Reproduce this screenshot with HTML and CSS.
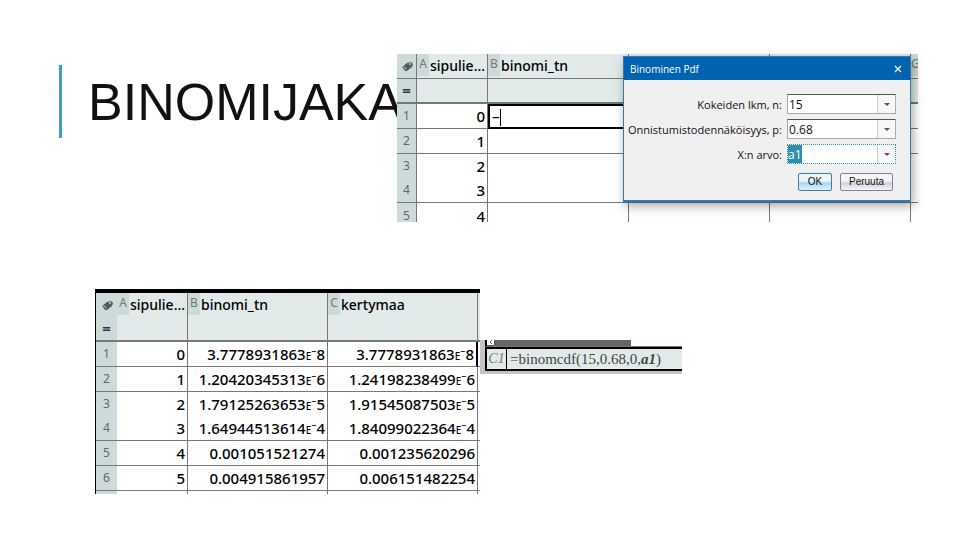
FILE: index.html
```html
<!DOCTYPE html>
<html lang="fi">
<head>
<meta charset="utf-8">
<meta name="viewport" content="width=device-width, initial-scale=1">
<title>Binomijakauma</title>
<link rel="stylesheet" href="styles.css">
</head>
<body>
<main class="slide">
  <section class="top">
    <header class="heading"><h1>BINOMIJAKA</h1></header>
    <div class="input-view">
      <div class="sheet-clip">
        <table class="sheet sheet-input">
          <colgroup><col class="col-index"><col class="col-a"><col class="col-b"><col class="col-b"><col class="col-b"><col></colgroup>
          <thead>
            <tr>
              <th class="index"><svg class="tag" viewBox="0 0 12 9" aria-hidden="true"><path d="M1 5 6 1 10 0 12 2 11 5 6 9 4 9Z" fill="#555b5b"/><path d="M1 5 4 5 5 8" stroke="#a5b0af" fill="none"/><circle cx="9" cy="2" r="1" fill="#ccdad9"/></svg></th>
              <th><span class="name"><span class="letter">A</span>sipulie...</span></th>
              <th><span class="name"><span class="letter">B</span>binomi_tn</span></th>
              <th></th><th></th>
              <th><span class="name"><span class="letter letter-cut">G</span></span></th>
            </tr>
            <tr class="formula"><th class="index"><span class="equals">=</span></th><td></td><td></td><td></td><td></td><td></td></tr>
          </thead>
          <tbody>
            <tr><th class="index">1</th><td>0</td><td class="editing">–<span class="caret"></span></td><td></td><td></td><td></td></tr>
            <tr><th class="index">2</th><td>1</td><td></td><td></td><td></td><td></td></tr>
            <tr class="open"><th class="index">3</th><td>2</td><td></td><td></td><td></td><td></td></tr>
            <tr><th class="index">4</th><td>3</td><td></td><td></td><td></td><td></td></tr>
            <tr class="last"><th class="index">5</th><td>4</td><td></td><td></td><td></td><td></td></tr>
          </tbody>
        </table>
      </div>
      <form class="dialog" role="dialog" aria-labelledby="dialog-title">
        <div class="titlebar">
          <span id="dialog-title">Binominen Pdf</span>
          <button type="button" class="close" aria-label="Sulje"><svg viewBox="0 0 8 8" aria-hidden="true"><path d="M1 1 7 7M7 1 1 7" stroke="#fff" stroke-width="1.2"/></svg></button>
        </div>
        <div class="fields">
          <label for="trials">Kokeiden lkm, n:</label>
          <span class="combo"><input id="trials" value="15"><button type="button" aria-label="Valitse n"></button></span>
          <label for="prob">Onnistumistodennäköisyys, p:</label>
          <span class="combo"><input id="prob" value="0.68"><button type="button" aria-label="Valitse p"></button></span>
          <label for="xval">X:n arvo:</label>
          <span class="combo active"><input id="xval" value="a1" size="1"><button type="button" aria-label="Valitse X"></button></span>
        </div>
        <div class="actions">
          <button type="button" class="ok">OK</button>
          <button type="button">Peruuta</button>
        </div>
      </form>
    </div>
  </section>
  <section class="bottom">
    <div class="result-view">
      <table class="sheet sheet-result">
        <colgroup><col class="col-index"><col class="col-a"><col class="col-b"><col class="col-c"><col></colgroup>
        <thead>
          <tr>
            <th class="index"><svg class="tag" viewBox="0 0 12 9" aria-hidden="true"><path d="M1 5 6 1 10 0 12 2 11 5 6 9 4 9Z" fill="#555b5b"/><path d="M1 5 4 5 5 8" stroke="#a5b0af" fill="none"/><circle cx="9" cy="2" r="1" fill="#ccdad9"/></svg></th>
            <th><span class="name"><span class="letter">A</span>sipulie...</span></th>
            <th><span class="name"><span class="letter">B</span>binomi_tn</span></th>
            <th><span class="name"><span class="letter">C</span>kertymaa</span></th>
            <th></th>
          </tr>
          <tr class="formula"><th class="index"><span class="equals">=</span></th><td></td><td></td><td></td><td></td></tr>
        </thead>
        <tbody>
          <tr class="current"><th class="index">1</th><td>0</td><td>3.7778931863<small>E</small>⁻8</td><td>3.7778931863<small>E</small>⁻8</td><td></td></tr>
          <tr><th class="index">2</th><td>1</td><td>1.20420345313<small>E</small>⁻6</td><td>1.24198238499<small>E</small>⁻6</td><td></td></tr>
          <tr class="open"><th class="index">3</th><td>2</td><td>1.79125263653<small>E</small>⁻5</td><td>1.91545087503<small>E</small>⁻5</td><td></td></tr>
          <tr><th class="index">4</th><td>3</td><td>1.64944513614<small>E</small>⁻4</td><td>1.84099022364<small>E</small>⁻4</td><td></td></tr>
          <tr><th class="index">5</th><td>4</td><td>0.001051521274</td><td>0.001235620296</td><td></td></tr>
          <tr><th class="index">6</th><td>5</td><td>0.004915861957</td><td>0.006151482254</td><td></td></tr>
          <tr class="stub"><th class="index"></th><td></td><td></td><td></td><td></td></tr>
        </tbody>
      </table>
    </div>
    <div class="formula-view">
      <div class="scroll"><svg class="scroll-arrow" viewBox="0 0 8 6" aria-hidden="true"><path d="M0 5.5H7.500V0M5 0 3 2 5 4" fill="none" stroke="#555"/></svg><span class="scroll-thumb"></span></div>
      <div class="entry"><span class="cell-name">C1</span><span class="expression">=binomcdf(15,0.68,0,<i>a1</i>)</span></div>
    </div>
  </section>
</main>
</body>
</html>
```

FILE: styles.css
```css
* { box-sizing: border-box; }

body {
  margin: 0;
  background: #fff;
  color: #000;
  font-family: "Open Sans", "Noto Sans", sans-serif;
}

button, input { font: inherit; margin: 0; }

.slide { padding: 54px 42px 0 59px; }

.top { display: flex; align-items: flex-start; }

.heading {
  flex: 0 0 338px;
  min-width: 0;
  margin-top: 11px;
  padding: 2px 0 0 26px;
  border-left: 3px solid #3f9fc8;
  white-space: nowrap;
}

h1 {
  margin: 0;
  color: #111;
  font: 400 52px/71px "Liberation Sans", sans-serif;
}

.input-view { position: relative; flex: 1; min-width: 0; }
.sheet-clip { max-height: 168px; overflow: hidden; }

/* Spreadsheet */
.sheet {
  width: 100%;
  table-layout: fixed;
  border-collapse: separate;
  border-spacing: 0;
  background: #fff;
  font-family: "Noto Sans", "Open Sans", sans-serif;
  font-size: 15px;
  font-weight: 500;
  line-height: 20px;
}

.sheet tr { height: 25px; }

.sheet th, .sheet td {
  padding: 0 2px 0 0;
  border-right: 1px solid #777;
  border-bottom: 1px solid #777;
  text-align: right;
  white-space: nowrap;
}

.sheet th:last-child, .sheet td:last-child { border-right: 0; }
.sheet thead th, .sheet thead td { background: #e1eae9; }
.sheet thead th { padding: 0; font-size: 14px; font-weight: 500; }
.sheet .formula > * { border-bottom: 2px solid #777; }

.sheet thead .index, .sheet tbody .index {
  padding: 0;
  background: #ccdad9;
  color: #666;
  font-size: 12px;
  font-weight: 400;
  text-align: center;
}

.equals { color: #333; font-size: 15px; font-weight: 700; }
.sheet .open { height: 24px; }
.sheet .open > * { border-bottom: 0; }
.sheet small { font-size: 10px; line-height: 10px; }

.tag { display: block; width: 12px; height: 9px; margin: 0 auto; }
.name { display: flex; height: 24px; line-height: 24px; }

.letter {
  width: 12px;
  margin-right: 1px;
  height: 22px;
  line-height: 20px;
  background: #ccdad9;
  color: #777;
  font-size: 12px;
  font-weight: 400;
  text-align: center;
}

.letter-cut { width: 9px; }

.sheet-input .col-index { width: 20px; }
.col-a { width: 71px; }
.col-b { width: 141px; }
.sheet-input .last > * { border-bottom: 0; }

.sheet-input .editing {
  padding: 0 2px;
  border: 2px solid #000;
  text-align: left;
  line-height: 18px;
}

.caret { display: inline-block; width: 1px; height: 17px; background: #000; vertical-align: middle; }

/* Dialog */
.dialog {
  position: absolute;
  top: 2px;
  right: 7px;
  width: 288px;
  border: 1px solid #2f79b5;
  border-bottom-width: 2px;
  background: #f0f0f0;
  box-shadow: 2px 4px 10px rgba(0, 0, 0, .35);
  font-size: 11px;
}

.titlebar {
  display: flex;
  align-items: center;
  justify-content: space-between;
  height: 23px;
  padding: 0 6px;
  background: #0063b1;
  color: #fff;
  font-size: 10px;
}

.close { width: 12px; height: 12px; padding: 2px; border: 0; background: none; }
.close svg { display: block; width: 8px; height: 8px; }

.fields {
  display: grid;
  grid-template-columns: 1fr 109px;
  gap: 5px;
  align-items: center;
  padding: 14px 14px 0 4px;
  color: #111;
  text-align: right;
  white-space: nowrap;
}

.combo {
  display: flex;
  height: 20px;
  border: 1px solid #aaa;
  border-top-color: #555;
  background: #fff;
}

.combo input {
  flex: 1;
  min-width: 0;
  padding: 0 1px;
  border: 0;
  background: #fff;
  color: #111;
  font-size: 12px;
}

.combo button {
  display: grid;
  place-items: center;
  width: 18px;
  padding: 0;
  border: 0;
  border-left: 1px solid #ccc;
  background: #f7f7f7;
}

.combo button::before {
  content: "";
  border: 3px solid transparent;
  border-top-color: #555;
  border-bottom: 0;
}

.combo.active { border: 1px dotted #2d8fb8; }
.combo.active input { flex: 0 0 14px; padding: 0; background: #2d8fb0; color: #fff; }
.combo.active button { margin-left: auto; }

.actions {
  display: flex;
  justify-content: flex-end;
  gap: 8px;
  padding: 9px 17px 9px;
}

.actions button {
  width: 53px;
  height: 18px;
  padding: 0;
  border: 1px solid #81819a;
  border-radius: 2px;
  background: linear-gradient(#f5f5f8 45%, #cfcfdb 55%, #f5f5fa);
  color: #111;
  font: 10px/14px "Liberation Sans", sans-serif;
}

.actions .ok {
  width: 34px;
  border-color: #3f7da5;
  background: linear-gradient(#eaf5fc 45%, #aad4ed 55%, #e0f4ff);
}

/* Result table and formula line */
.bottom {
  display: flex;
  align-items: flex-start;
  margin-top: 67px;
  padding-left: 36px;
}

.result-view { flex: 0 0 385px; }

.sheet-result { border-top: 4px solid #000; border-left: 1px solid #000; }
.sheet-result .col-index { width: 21px; }
.sheet-result .col-b { width: 140px; }
.col-c { width: 150px; }
.sheet-result thead .index, .sheet-result tbody .index { border-right: 0; }
.sheet-result thead tr:first-child > * { border-bottom: 0; }
.sheet-result thead tr:first-child { height: 24px; }
.sheet-result .current td:nth-child(4) { border-right: 2px solid #000; }
.sheet-result .stub { height: 3px; }
.sheet-result .stub > * { border-bottom: 0; }

.formula-view {
  margin-top: 51px;
  flex: 0 1 202px;
  padding: 0 0 3px 5px;
  background: #c4c4c4;
}

.scroll {
  display: flex;
  height: 7px;
  border-left: 2px solid #000;
  border-bottom: 1px solid #777;
  background: #fff;
}

.scroll-arrow { width: 8px; height: 6px; }
.scroll-thumb { width: 136px; background: #666; }

.entry {
  display: flex;
  height: 24px;
  border: 2px solid #000;
  border-right: 0;
  background: #e1eae9;
  color: #444;
  font: 15px/20px "Liberation Serif", serif;
  white-space: nowrap;
}

.cell-name {
  width: 20px;
  border-right: 1px solid #000;
  color: #777;
  font-size: 14px;
  font-style: italic;
  text-align: center;
}

.expression { padding-left: 3px; }
.expression i { font-weight: 700; }
```
